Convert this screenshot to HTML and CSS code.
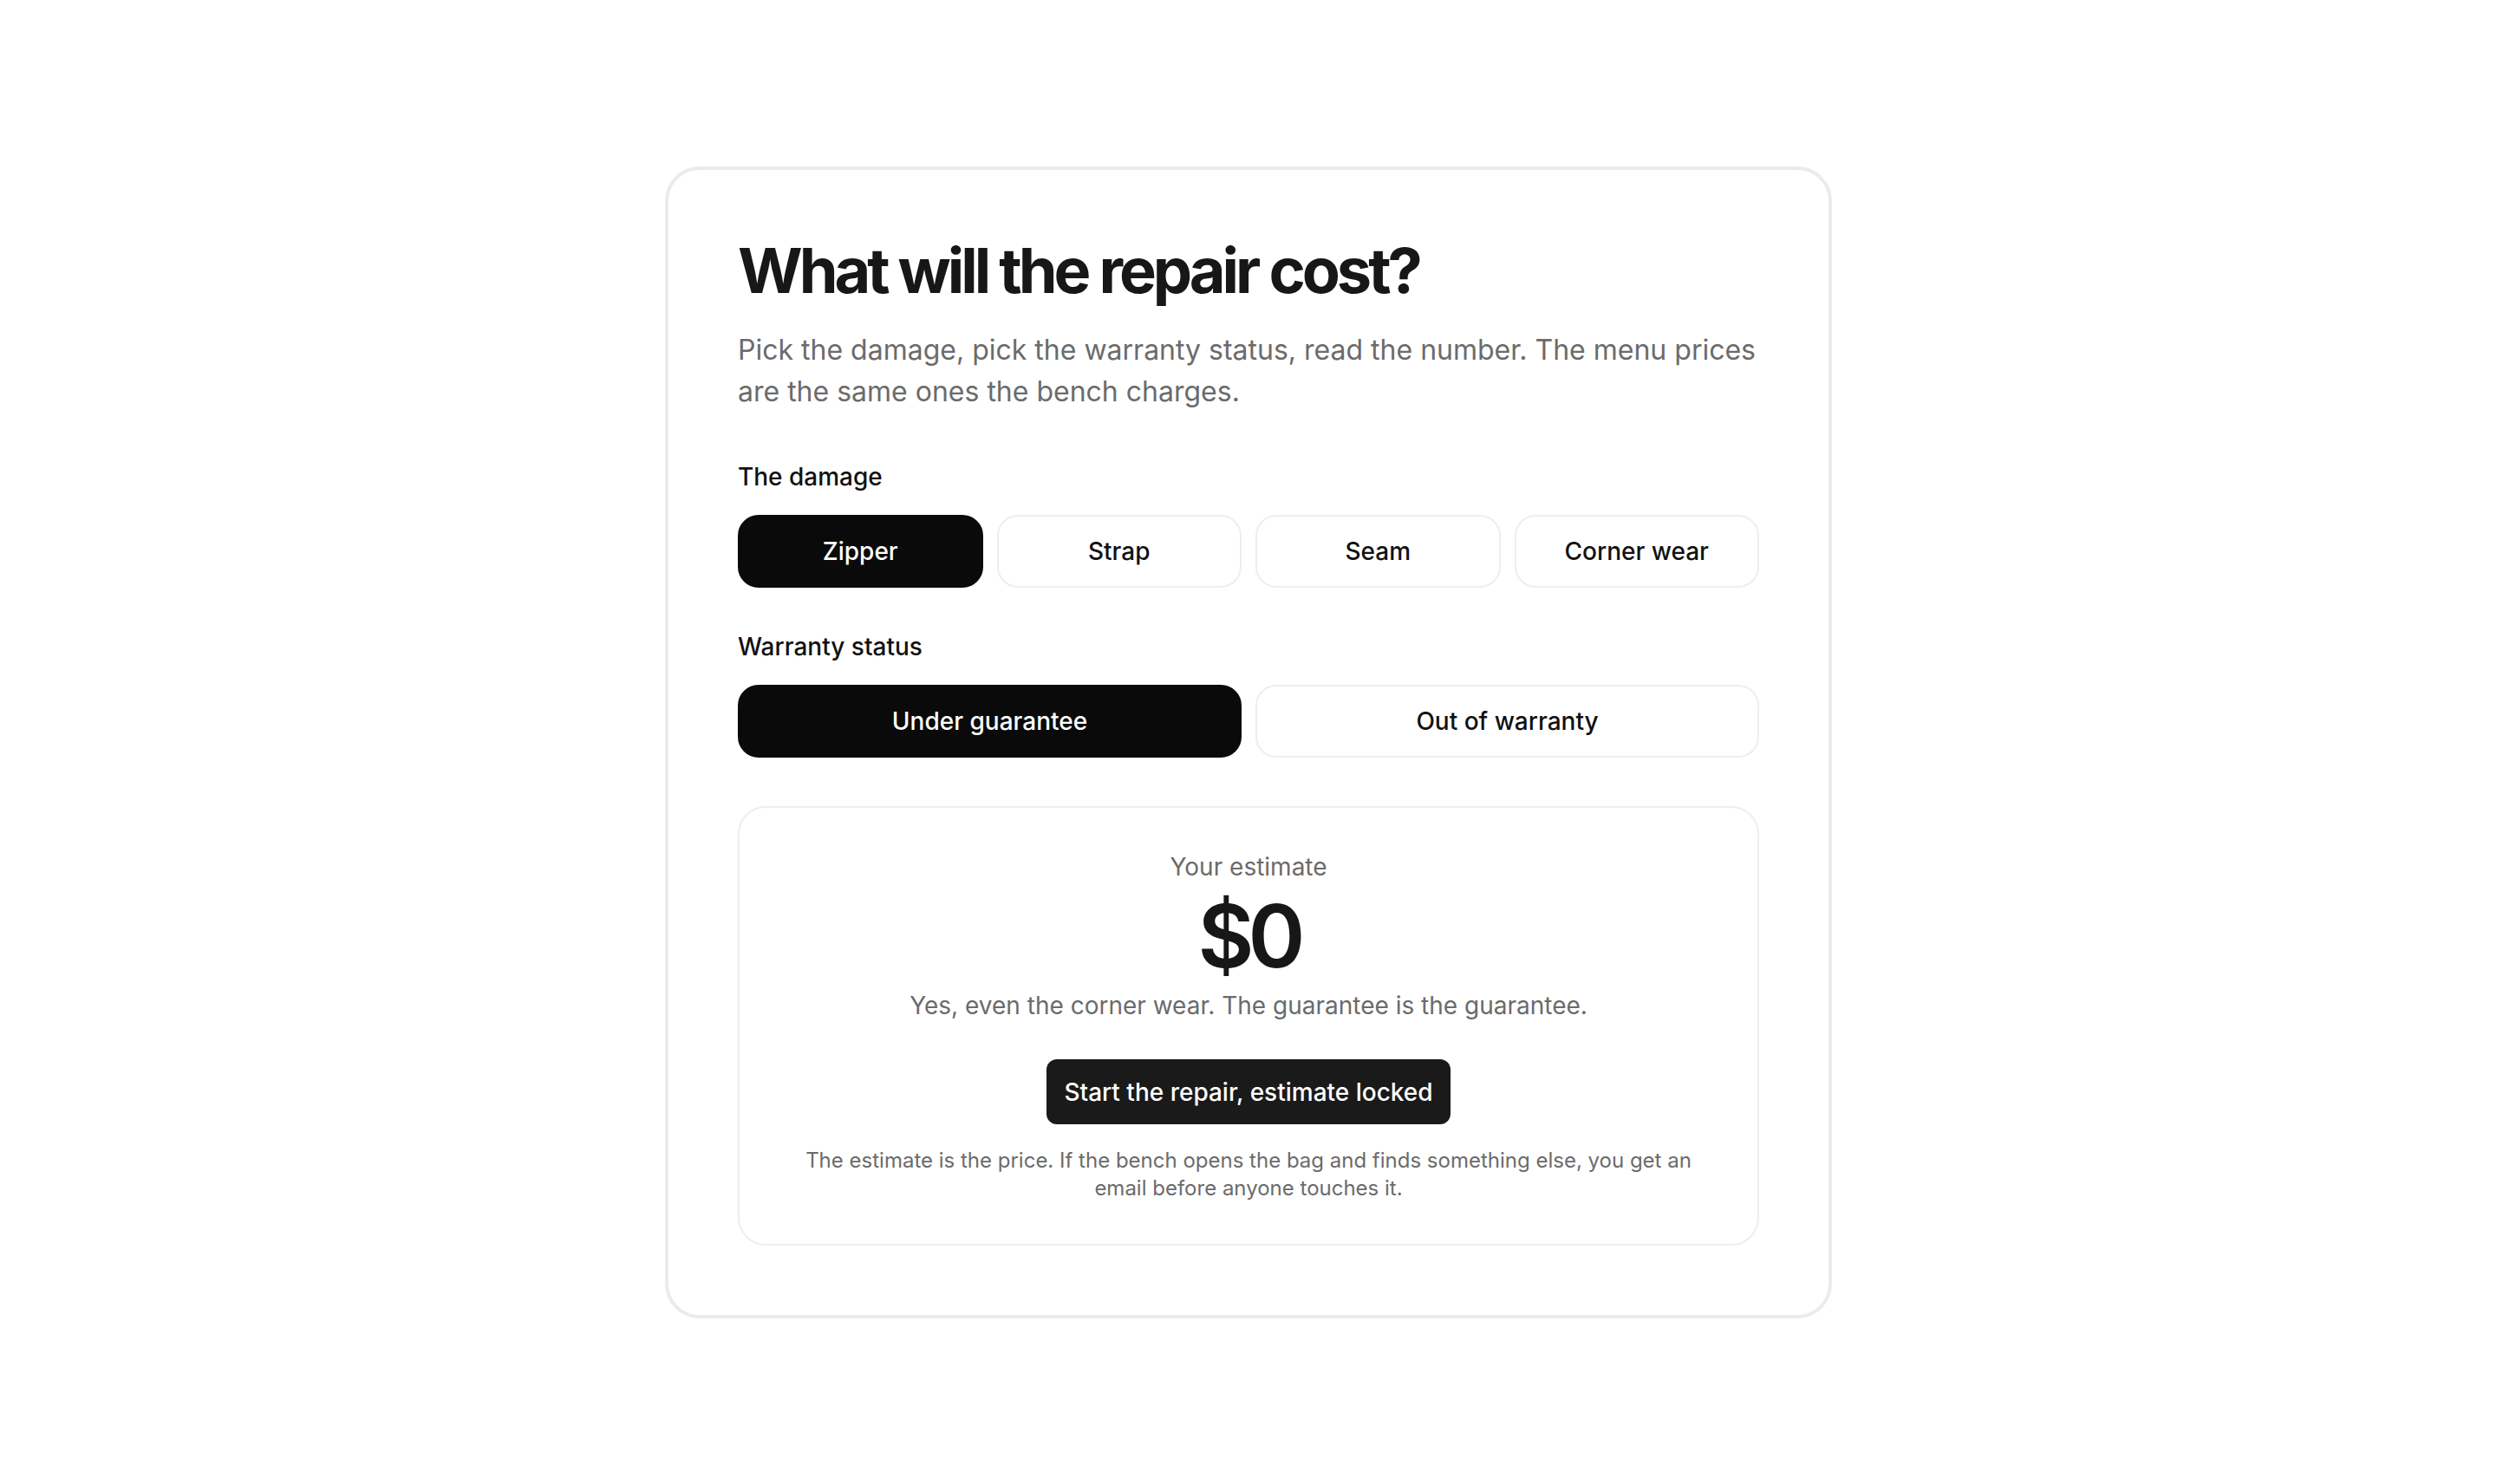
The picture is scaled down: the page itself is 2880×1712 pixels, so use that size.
FILE: index.html
```html
<!DOCTYPE html>
<html lang="en">
<head>
<meta charset="utf-8">
<title>What will the repair cost?</title>
<link rel="stylesheet" href="styles.css">
</head>
<body>
<main class="card">
  <h1 class="title">What will the repair cost?</h1>
  <p class="lede">Pick the damage, pick the warranty status, read the number. The menu prices are the same ones the bench charges.</p>

  <section class="group group-first">
    <div class="label">The damage</div>
    <div class="options options-4">
      <button class="opt is-active">Zipper</button>
      <button class="opt">Strap</button>
      <button class="opt">Seam</button>
      <button class="opt">Corner wear</button>
    </div>
  </section>

  <section class="group group-second">
    <div class="label">Warranty status</div>
    <div class="options options-2">
      <button class="opt is-active">Under guarantee</button>
      <button class="opt">Out of warranty</button>
    </div>
  </section>

  <section class="estimate">
    <div class="est-label">Your estimate</div>
    <div class="est-value">$0</div>
    <div class="est-note">Yes, even the corner wear. The guarantee is the guarantee.</div>
    <button class="cta">Start the repair, estimate locked</button>
    <p class="fine">The estimate is the price. If the bench opens the bag and finds something else, you get an email before anyone touches it.</p>
  </section>
</main>
</body>
</html>
```

FILE: styles.css
```css
* { box-sizing: border-box; }

html, body {
  margin: 0;
  padding: 0;
  background: #ffffff;
}

body {
  min-height: 100vh;
  display: flex;
  align-items: center;
  justify-content: center;
  font-family: Inter, "Noto Sans", "Liberation Sans", sans-serif;
  color: #111111;
}

.card {
  width: 1346px;
  border: 4px solid #ebebeb;
  border-radius: 40px;
  padding: 80px;
  background: #ffffff;
}

.title {
  margin: 0;
  font-size: 72px;
  line-height: 72px;
  font-weight: 700;
  letter-spacing: -0.056em;
  color: #171717;
}

.lede {
  margin: 32px 0 0;
  font-size: 32px;
  line-height: 48px;
  color: #6b6b6b;
}

.group-first { margin-top: 54px; }
.group-second { margin-top: 48px; }

.label {
  font-size: 28px;
  line-height: 40px;
  font-weight: 500;
  color: #111111;
  margin-bottom: 24px;
}

.options {
  display: grid;
  gap: 16px;
}
.options-4 { grid-template-columns: repeat(4, 1fr); }
.options-2 { grid-template-columns: repeat(2, 1fr); }

.opt {
  font-family: inherit;
  font-size: 28px;
  line-height: 40px;
  font-weight: 500;
  color: #111111;
  background: #ffffff;
  border: 2px solid #eeeeee;
  border-radius: 24px;
  padding: 20px 24px;
  cursor: pointer;
}

.opt.is-active {
  background: #0a0a0a;
  border-color: #0a0a0a;
  color: #ffffff;
}

.estimate {
  margin-top: 56px;
  border: 2px solid #eeeeee;
  border-radius: 32px;
  padding: 48px;
  text-align: center;
  display: flex;
  flex-direction: column;
  align-items: center;
}

.est-label {
  font-size: 28px;
  line-height: 40px;
  color: #6b6b6b;
}

.est-value {
  margin-top: 4px;
  font-size: 100px;
  line-height: 112px;
  font-weight: 600;
  letter-spacing: -0.07em;
  color: #171717;
}

.est-note {
  margin-top: 4px;
  font-size: 28px;
  line-height: 40px;
  color: #6b6b6b;
}

.cta {
  margin-top: 42px;
  font-family: inherit;
  font-size: 28px;
  line-height: 40px;
  font-weight: 500;
  color: #ffffff;
  background: #1a1a1a;
  border: none;
  border-radius: 12px;
  padding: 18px 20px 17px;
  cursor: pointer;
}

.fine {
  margin: 26px 0 0;
  font-size: 24px;
  line-height: 32px;
  color: #6b6b6b;
}
```
